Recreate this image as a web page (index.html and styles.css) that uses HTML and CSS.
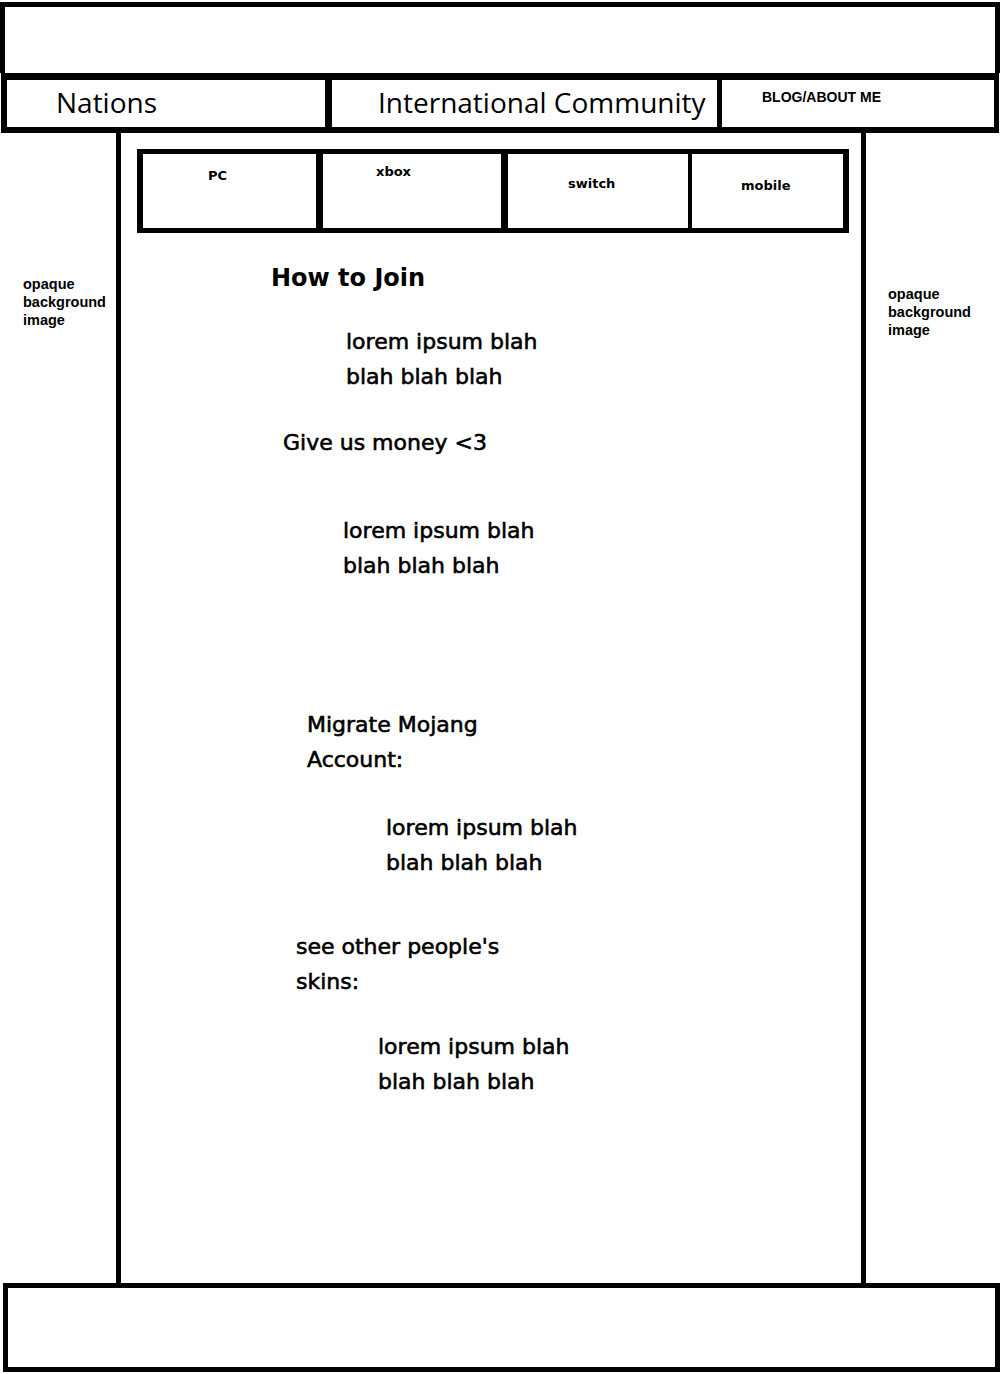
FILE: index.html
```html
<!DOCTYPE html>
<html lang="en">
<head>
    <meta charset="UTF-8">
    <title>Nations - How to Join</title>
    <link rel="stylesheet" href="styles.css">
</head>
<body>
    <header class="banner"></header>

    <nav class="topnav">
        <div class="topnav-item nations">Nations</div>
        <div class="topnav-item community">International Community</div>
        <div class="topnav-item blog">BLOG/ABOUT ME</div>
    </nav>

    <div class="page">
        <aside class="side side-left">opaque<br>background<br>image</aside>

        <main class="column">
            <div class="tabs">
                <div class="tab tab-pc">PC</div>
                <div class="tab tab-xbox">xbox</div>
                <div class="tab tab-switch">switch</div>
                <div class="tab tab-mobile">mobile</div>
            </div>

            <h2 class="title">How to Join</h2>
            <p class="blurb blurb-1">lorem ipsum blah<br>blah blah blah</p>

            <h3 class="heading heading-give">Give us money &lt;3</h3>
            <p class="blurb blurb-2">lorem ipsum blah<br>blah blah blah</p>

            <h3 class="heading heading-migrate">Migrate Mojang<br>Account:</h3>
            <p class="blurb blurb-3">lorem ipsum blah<br>blah blah blah</p>

            <h3 class="heading heading-skins">see other people's<br>skins:</h3>
            <p class="blurb blurb-4">lorem ipsum blah<br>blah blah blah</p>
        </main>

        <aside class="side side-right">opaque<br>background<br>image</aside>
    </div>

    <footer class="footer"></footer>
</body>
</html>
```

FILE: styles.css
```css
* { box-sizing: border-box; }
body { margin: 0; width: 1000px; background: #fff; color: #000; font-family: "DejaVu Sans", sans-serif; }

/* top banner */
.banner { margin-top: 2px; width: 1000px; height: 71px; border: 5px solid #000; border-bottom: 0; }

/* main nav */
.topnav { display: flex; margin-left: 1px; width: 998px; height: 60px; border: 6px solid #000; border-top-width: 7px; border-right-width: 5px; }
.topnav-item { height: 100%; }
.nations { width: 325px; border-right: 7px solid #000; padding-left: 49px; font-family: "Open Sans", sans-serif; font-size: 28px; line-height: 45px; }
.community { width: 390px; border-right: 5px solid #000; padding-left: 46px; font-family: "Open Sans", sans-serif; font-size: 28px; line-height: 45px; white-space: nowrap; }
.blog { flex: 1; padding: 9px 0 0 40px; font-family: "Liberation Sans", Arial, sans-serif; font-weight: bold; font-size: 14px; line-height: 16px; }

/* body area */
.page { display: flex; height: 1150px; }
.side { font-family: "Liberation Sans", Arial, sans-serif; font-weight: bold; font-size: 14.5px; line-height: 18px; }
.side-left { width: 116px; padding: 142px 0 0 23px; }
.side-right { flex: 1; padding: 152px 0 0 22px; }
.column { width: 750px; border-left: 5px solid #000; border-right: 5px solid #000; }

/* platform tabs */
.tabs { display: flex; margin: 16px 12px 0 16px; height: 84px; border: 6px solid #000; border-top-width: 5px; border-bottom-width: 5px; }
.tab { font-weight: bold; font-size: 13px; line-height: 16px; }
.tab-pc { width: 180px; border-right: 7px solid #000; padding: 14px 0 0 65px; }
.tab-xbox { width: 185px; border-right: 7px solid #000; padding: 10px 0 0 53px; }
.tab-switch { width: 184px; border-right: 4px solid #000; padding: 22px 0 0 60px; }
.tab-mobile { flex: 1; padding: 24px 0 0 49px; }

/* page text */
.title { margin: 28px 0 0 150px; font-size: 24px; line-height: 35px; }
.heading { margin: 0; font-weight: normal; font-size: 22px; line-height: 35px; -webkit-text-stroke: 0.6px #000; }
.blurb { margin: 0; font-size: 22px; line-height: 35px; -webkit-text-stroke: 0.6px #000; }

.blurb-1 { margin: 28px 0 0 225px; }
.heading-give { margin: 31px 0 0 162px; }
.blurb-2 { margin: 53px 0 0 222px; }
.heading-migrate { margin: 124px 0 0 186px; }
.blurb-3 { margin: 33px 0 0 265px; }
.heading-skins { margin: 49px 0 0 175px; }
.blurb-4 { margin: 30px 0 0 257px; }

/* footer */
.footer { margin-left: 3px; width: 997px; height: 89px; border: 5px solid #000; }
```
